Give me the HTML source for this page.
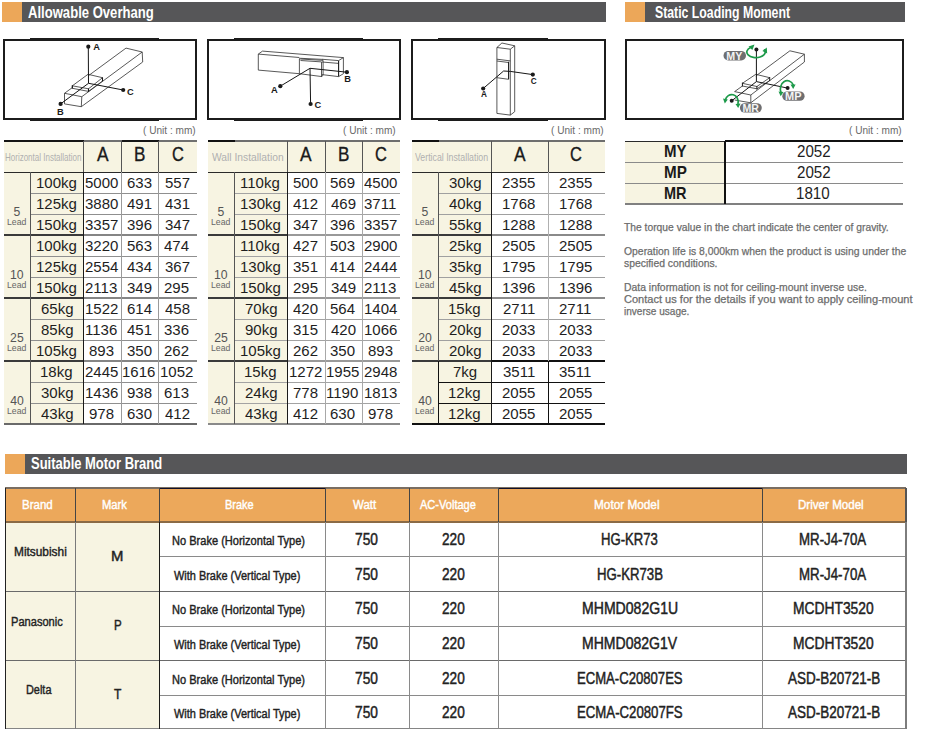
<!DOCTYPE html>
<html><head><meta charset="utf-8"><style>
html,body{margin:0;padding:0;background:#fff;}
body{width:925px;height:734px;position:relative;overflow:hidden;font-family:"Liberation Sans",sans-serif;}
</style></head><body>
<div style="position:absolute;left:2.00px;top:2.00px;width:20.00px;height:20.00px;background:#eca759;"></div><div style="position:absolute;left:22.00px;top:2.00px;width:584.00px;height:20.00px;background:#565658;"></div><div style="position:absolute;left:28.07px;top:5.00px;font-size:15.92px;line-height:15.92px;font-weight:bold;color:#fff;white-space:nowrap;transform:scaleX(0.8222);transform-origin:0 0;">Allowable Overhang</div><div style="position:absolute;left:625.00px;top:2.00px;width:20.00px;height:20.00px;background:#eca759;"></div><div style="position:absolute;left:645.00px;top:2.00px;width:260.00px;height:20.00px;background:#565658;"></div><div style="position:absolute;left:654.65px;top:5.00px;font-size:15.92px;line-height:15.92px;font-weight:bold;color:#fff;white-space:nowrap;transform:scaleX(0.7717);transform-origin:0 0;">Static Loading Moment</div><div style="position:absolute;left:5.00px;top:454.00px;width:20.00px;height:20.00px;background:#eca759;"></div><div style="position:absolute;left:25.00px;top:454.00px;width:882.00px;height:20.00px;background:#565658;"></div><div style="position:absolute;left:30.63px;top:456.00px;font-size:15.92px;line-height:15.92px;font-weight:bold;color:#fff;white-space:nowrap;transform:scaleX(0.8154);transform-origin:0 0;">Suitable Motor Brand</div><div style="position:absolute;left:3.00px;top:39.00px;width:194.00px;height:2.00px;background:#1c1c1c;"></div><div style="position:absolute;left:3.00px;top:118.00px;width:194.00px;height:2.00px;background:#1c1c1c;"></div><div style="position:absolute;left:3.00px;top:39.00px;width:2.00px;height:81.00px;background:#1c1c1c;"></div><div style="position:absolute;left:195.00px;top:39.00px;width:2.00px;height:81.00px;background:#1c1c1c;"></div><div style="position:absolute;left:30.00px;top:38.20px;width:129.00px;height:0.80px;background:#1c1c1c;"></div><div style="position:absolute;left:30.00px;top:120.00px;width:129.00px;height:0.80px;background:#1c1c1c;"></div><div style="position:absolute;left:207.00px;top:39.00px;width:194.00px;height:2.00px;background:#1c1c1c;"></div><div style="position:absolute;left:207.00px;top:118.00px;width:194.00px;height:2.00px;background:#1c1c1c;"></div><div style="position:absolute;left:207.00px;top:39.00px;width:2.00px;height:81.00px;background:#1c1c1c;"></div><div style="position:absolute;left:399.00px;top:39.00px;width:2.00px;height:81.00px;background:#1c1c1c;"></div><div style="position:absolute;left:234.00px;top:38.20px;width:129.00px;height:0.80px;background:#1c1c1c;"></div><div style="position:absolute;left:234.00px;top:120.00px;width:129.00px;height:0.80px;background:#1c1c1c;"></div><div style="position:absolute;left:411.00px;top:39.00px;width:195.00px;height:2.00px;background:#1c1c1c;"></div><div style="position:absolute;left:411.00px;top:118.00px;width:195.00px;height:2.00px;background:#1c1c1c;"></div><div style="position:absolute;left:411.00px;top:39.00px;width:2.00px;height:81.00px;background:#1c1c1c;"></div><div style="position:absolute;left:604.00px;top:39.00px;width:2.00px;height:81.00px;background:#1c1c1c;"></div><div style="position:absolute;left:438.00px;top:38.20px;width:110.00px;height:0.80px;background:#1c1c1c;"></div><div style="position:absolute;left:438.00px;top:120.00px;width:110.00px;height:0.80px;background:#1c1c1c;"></div><div style="position:absolute;left:624.50px;top:39.00px;width:279.50px;height:2.00px;background:#1c1c1c;"></div><div style="position:absolute;left:624.50px;top:118.00px;width:279.50px;height:2.00px;background:#1c1c1c;"></div><div style="position:absolute;left:624.50px;top:39.00px;width:2.00px;height:81.00px;background:#1c1c1c;"></div><div style="position:absolute;left:902.00px;top:39.00px;width:2.00px;height:81.00px;background:#1c1c1c;"></div><div style="position:absolute;left:143.27px;top:125.00px;font-size:11.34px;line-height:11.34px;font-weight:normal;color:#6a6a6a;white-space:nowrap;transform:scaleX(0.8911);transform-origin:0 0;">( Unit : mm)</div><div style="position:absolute;left:342.97px;top:125.00px;font-size:11.34px;line-height:11.34px;font-weight:normal;color:#6a6a6a;white-space:nowrap;transform:scaleX(0.8911);transform-origin:0 0;">( Unit : mm)</div><div style="position:absolute;left:550.57px;top:125.00px;font-size:11.34px;line-height:11.34px;font-weight:normal;color:#6a6a6a;white-space:nowrap;transform:scaleX(0.8911);transform-origin:0 0;">( Unit : mm)</div><div style="position:absolute;left:849.17px;top:125.00px;font-size:11.34px;line-height:11.34px;font-weight:normal;color:#6a6a6a;white-space:nowrap;transform:scaleX(0.8911);transform-origin:0 0;">( Unit : mm)</div><div style="position:absolute;left:4.00px;top:141.00px;width:193.00px;height:31.00px;background:#f7f4e2;"></div><div style="position:absolute;left:4.00px;top:172.00px;width:79.50px;height:252.00px;background:#f7f4e2;"></div><div style="position:absolute;left:5.14px;top:152.00px;font-size:10.76px;line-height:10.76px;font-weight:normal;color:#b0b0b0;white-space:nowrap;transform:scaleX(0.7437);transform-origin:0 0;">Horizontal Installation</div><div style="position:absolute;left:96.57px;top:144.00px;font-size:20.35px;line-height:20.35px;font-weight:normal;color:#1a1a1a;white-space:nowrap;transform:scaleX(0.8524);transform-origin:0 0;-webkit-text-stroke:0.35px #1a1a1a;">A</div><div style="position:absolute;left:133.90px;top:144.00px;font-size:20.35px;line-height:20.35px;font-weight:normal;color:#1a1a1a;white-space:nowrap;transform:scaleX(0.8408);transform-origin:0 0;-webkit-text-stroke:0.35px #1a1a1a;">B</div><div style="position:absolute;left:171.56px;top:144.00px;font-size:20.35px;line-height:20.35px;font-weight:normal;color:#1a1a1a;white-space:nowrap;transform:scaleX(0.8083);transform-origin:0 0;-webkit-text-stroke:0.35px #1a1a1a;">C</div><div style="position:absolute;left:4.00px;top:140.00px;width:79.50px;height:1.50px;background:#151515;"></div><div style="position:absolute;left:83.50px;top:140.00px;width:38.00px;height:1.50px;background:#707070;"></div><div style="position:absolute;left:121.50px;top:140.00px;width:37.00px;height:1.50px;background:#151515;"></div><div style="position:absolute;left:158.50px;top:140.00px;width:38.50px;height:1.50px;background:#707070;"></div><div style="position:absolute;left:4.00px;top:171.50px;width:193.00px;height:1.50px;background:#2a2a2a;"></div><div style="position:absolute;left:83.00px;top:141.00px;width:1.10px;height:31.00px;background:#555;"></div><div style="position:absolute;left:121.00px;top:141.00px;width:1.10px;height:31.00px;background:#555;"></div><div style="position:absolute;left:158.00px;top:141.00px;width:1.10px;height:31.00px;background:#555;"></div><div style="position:absolute;left:30.50px;top:192.50px;width:166.50px;height:1.10px;background:#8f8f8f;"></div><div style="position:absolute;left:30.50px;top:213.50px;width:166.50px;height:1.10px;background:#8f8f8f;"></div><div style="position:absolute;left:4.00px;top:234.40px;width:79.50px;height:1.20px;background:#3a3a3a;"></div><div style="position:absolute;left:83.50px;top:234.40px;width:113.50px;height:1.30px;background:#858585;"></div><div style="position:absolute;left:30.50px;top:255.50px;width:166.50px;height:1.10px;background:#8f8f8f;"></div><div style="position:absolute;left:30.50px;top:276.50px;width:166.50px;height:1.10px;background:#8f8f8f;"></div><div style="position:absolute;left:4.00px;top:297.40px;width:79.50px;height:1.20px;background:#3a3a3a;"></div><div style="position:absolute;left:83.50px;top:297.40px;width:113.50px;height:1.30px;background:#858585;"></div><div style="position:absolute;left:30.50px;top:318.50px;width:166.50px;height:1.10px;background:#8f8f8f;"></div><div style="position:absolute;left:30.50px;top:339.50px;width:166.50px;height:1.10px;background:#8f8f8f;"></div><div style="position:absolute;left:4.00px;top:360.40px;width:79.50px;height:1.20px;background:#3a3a3a;"></div><div style="position:absolute;left:83.50px;top:360.40px;width:113.50px;height:1.30px;background:#858585;"></div><div style="position:absolute;left:30.50px;top:381.50px;width:166.50px;height:1.10px;background:#8f8f8f;"></div><div style="position:absolute;left:30.50px;top:402.50px;width:166.50px;height:1.10px;background:#8f8f8f;"></div><div style="position:absolute;left:4.00px;top:423.20px;width:193.00px;height:2.00px;background:#6a6a6a;"></div><div style="position:absolute;left:30.00px;top:172.00px;width:1.10px;height:252.00px;background:#555;"></div><div style="position:absolute;left:82.90px;top:172.00px;width:1.40px;height:252.00px;background:#1a1a1a;"></div><div style="position:absolute;left:121.00px;top:172.00px;width:1.20px;height:252.00px;background:#9a9a9a;"></div><div style="position:absolute;left:158.00px;top:172.00px;width:1.20px;height:252.00px;background:#9a9a9a;"></div><div style="position:absolute;left:13.57px;top:206.00px;font-size:12.21px;line-height:12.21px;font-weight:normal;color:#555;white-space:nowrap;">5</div><div style="position:absolute;left:7.09px;top:217.00px;font-size:9.59px;line-height:9.59px;font-weight:normal;color:#666;white-space:nowrap;transform:scaleX(0.9079);transform-origin:0 0;">Lead</div><div style="position:absolute;left:36.17px;top:175.00px;font-size:15.50px;line-height:15.50px;font-weight:normal;color:#1e1e1e;white-space:nowrap;transform:scaleX(0.9680);transform-origin:0 0;">100kg</div><div style="position:absolute;left:85.00px;top:175.00px;font-size:15.50px;line-height:15.50px;font-weight:normal;color:#1e1e1e;white-space:nowrap;transform:scaleX(0.9680);transform-origin:0 0;">5000</div><div style="position:absolute;left:126.63px;top:175.00px;font-size:15.50px;line-height:15.50px;font-weight:normal;color:#1e1e1e;white-space:nowrap;transform:scaleX(0.9680);transform-origin:0 0;">633</div><div style="position:absolute;left:164.51px;top:175.00px;font-size:15.50px;line-height:15.50px;font-weight:normal;color:#1e1e1e;white-space:nowrap;transform:scaleX(0.9680);transform-origin:0 0;">557</div><div style="position:absolute;left:36.17px;top:196.00px;font-size:15.50px;line-height:15.50px;font-weight:normal;color:#1e1e1e;white-space:nowrap;transform:scaleX(0.9680);transform-origin:0 0;">125kg</div><div style="position:absolute;left:85.02px;top:196.00px;font-size:15.50px;line-height:15.50px;font-weight:normal;color:#1e1e1e;white-space:nowrap;transform:scaleX(0.9680);transform-origin:0 0;">3880</div><div style="position:absolute;left:126.88px;top:196.00px;font-size:15.50px;line-height:15.50px;font-weight:normal;color:#1e1e1e;white-space:nowrap;transform:scaleX(0.9680);transform-origin:0 0;">491</div><div style="position:absolute;left:164.63px;top:196.00px;font-size:15.50px;line-height:15.50px;font-weight:normal;color:#1e1e1e;white-space:nowrap;transform:scaleX(0.9680);transform-origin:0 0;">431</div><div style="position:absolute;left:36.17px;top:217.00px;font-size:15.50px;line-height:15.50px;font-weight:normal;color:#1e1e1e;white-space:nowrap;transform:scaleX(0.9680);transform-origin:0 0;">150kg</div><div style="position:absolute;left:85.10px;top:217.00px;font-size:15.50px;line-height:15.50px;font-weight:normal;color:#1e1e1e;white-space:nowrap;transform:scaleX(0.9680);transform-origin:0 0;">3357</div><div style="position:absolute;left:126.73px;top:217.00px;font-size:15.50px;line-height:15.50px;font-weight:normal;color:#1e1e1e;white-space:nowrap;transform:scaleX(0.9680);transform-origin:0 0;">396</div><div style="position:absolute;left:164.52px;top:217.00px;font-size:15.50px;line-height:15.50px;font-weight:normal;color:#1e1e1e;white-space:nowrap;transform:scaleX(0.9680);transform-origin:0 0;">347</div><div style="position:absolute;left:9.93px;top:269.00px;font-size:12.21px;line-height:12.21px;font-weight:normal;color:#555;white-space:nowrap;">10</div><div style="position:absolute;left:7.09px;top:280.00px;font-size:9.59px;line-height:9.59px;font-weight:normal;color:#666;white-space:nowrap;transform:scaleX(0.9079);transform-origin:0 0;">Lead</div><div style="position:absolute;left:36.17px;top:238.00px;font-size:15.50px;line-height:15.50px;font-weight:normal;color:#1e1e1e;white-space:nowrap;transform:scaleX(0.9680);transform-origin:0 0;">100kg</div><div style="position:absolute;left:85.02px;top:238.00px;font-size:15.50px;line-height:15.50px;font-weight:normal;color:#1e1e1e;white-space:nowrap;transform:scaleX(0.9680);transform-origin:0 0;">3220</div><div style="position:absolute;left:126.71px;top:238.00px;font-size:15.50px;line-height:15.50px;font-weight:normal;color:#1e1e1e;white-space:nowrap;transform:scaleX(0.9680);transform-origin:0 0;">563</div><div style="position:absolute;left:164.48px;top:238.00px;font-size:15.50px;line-height:15.50px;font-weight:normal;color:#1e1e1e;white-space:nowrap;transform:scaleX(0.9680);transform-origin:0 0;">474</div><div style="position:absolute;left:36.17px;top:259.00px;font-size:15.50px;line-height:15.50px;font-weight:normal;color:#1e1e1e;white-space:nowrap;transform:scaleX(0.9680);transform-origin:0 0;">125kg</div><div style="position:absolute;left:84.85px;top:259.00px;font-size:15.50px;line-height:15.50px;font-weight:normal;color:#1e1e1e;white-space:nowrap;transform:scaleX(0.9680);transform-origin:0 0;">2554</div><div style="position:absolute;left:126.73px;top:259.00px;font-size:15.50px;line-height:15.50px;font-weight:normal;color:#1e1e1e;white-space:nowrap;transform:scaleX(0.9680);transform-origin:0 0;">434</div><div style="position:absolute;left:164.52px;top:259.00px;font-size:15.50px;line-height:15.50px;font-weight:normal;color:#1e1e1e;white-space:nowrap;transform:scaleX(0.9680);transform-origin:0 0;">367</div><div style="position:absolute;left:36.17px;top:280.00px;font-size:15.50px;line-height:15.50px;font-weight:normal;color:#1e1e1e;white-space:nowrap;transform:scaleX(0.9680);transform-origin:0 0;">150kg</div><div style="position:absolute;left:84.96px;top:280.00px;font-size:15.50px;line-height:15.50px;font-weight:normal;color:#1e1e1e;white-space:nowrap;transform:scaleX(0.9680);transform-origin:0 0;">2113</div><div style="position:absolute;left:126.75px;top:280.00px;font-size:15.50px;line-height:15.50px;font-weight:normal;color:#1e1e1e;white-space:nowrap;transform:scaleX(0.9680);transform-origin:0 0;">349</div><div style="position:absolute;left:164.37px;top:280.00px;font-size:15.50px;line-height:15.50px;font-weight:normal;color:#1e1e1e;white-space:nowrap;transform:scaleX(0.9680);transform-origin:0 0;">295</div><div style="position:absolute;left:10.11px;top:332.00px;font-size:12.21px;line-height:12.21px;font-weight:normal;color:#555;white-space:nowrap;">25</div><div style="position:absolute;left:7.09px;top:343.00px;font-size:9.59px;line-height:9.59px;font-weight:normal;color:#666;white-space:nowrap;transform:scaleX(0.9079);transform-origin:0 0;">Lead</div><div style="position:absolute;left:40.53px;top:301.00px;font-size:15.50px;line-height:15.50px;font-weight:normal;color:#1e1e1e;white-space:nowrap;transform:scaleX(0.9680);transform-origin:0 0;">65kg</div><div style="position:absolute;left:84.82px;top:301.00px;font-size:15.50px;line-height:15.50px;font-weight:normal;color:#1e1e1e;white-space:nowrap;transform:scaleX(0.9680);transform-origin:0 0;">1522</div><div style="position:absolute;left:126.52px;top:301.00px;font-size:15.50px;line-height:15.50px;font-weight:normal;color:#1e1e1e;white-space:nowrap;transform:scaleX(0.9680);transform-origin:0 0;">614</div><div style="position:absolute;left:164.59px;top:301.00px;font-size:15.50px;line-height:15.50px;font-weight:normal;color:#1e1e1e;white-space:nowrap;transform:scaleX(0.9680);transform-origin:0 0;">458</div><div style="position:absolute;left:40.59px;top:322.00px;font-size:15.50px;line-height:15.50px;font-weight:normal;color:#1e1e1e;white-space:nowrap;transform:scaleX(0.9680);transform-origin:0 0;">85kg</div><div style="position:absolute;left:84.77px;top:322.00px;font-size:15.50px;line-height:15.50px;font-weight:normal;color:#1e1e1e;white-space:nowrap;transform:scaleX(0.9680);transform-origin:0 0;">1136</div><div style="position:absolute;left:126.88px;top:322.00px;font-size:15.50px;line-height:15.50px;font-weight:normal;color:#1e1e1e;white-space:nowrap;transform:scaleX(0.9680);transform-origin:0 0;">451</div><div style="position:absolute;left:164.48px;top:322.00px;font-size:15.50px;line-height:15.50px;font-weight:normal;color:#1e1e1e;white-space:nowrap;transform:scaleX(0.9680);transform-origin:0 0;">336</div><div style="position:absolute;left:36.17px;top:343.00px;font-size:15.50px;line-height:15.50px;font-weight:normal;color:#1e1e1e;white-space:nowrap;transform:scaleX(0.9680);transform-origin:0 0;">105kg</div><div style="position:absolute;left:89.19px;top:343.00px;font-size:15.50px;line-height:15.50px;font-weight:normal;color:#1e1e1e;white-space:nowrap;transform:scaleX(0.9680);transform-origin:0 0;">893</div><div style="position:absolute;left:126.69px;top:343.00px;font-size:15.50px;line-height:15.50px;font-weight:normal;color:#1e1e1e;white-space:nowrap;transform:scaleX(0.9680);transform-origin:0 0;">350</div><div style="position:absolute;left:164.43px;top:343.00px;font-size:15.50px;line-height:15.50px;font-weight:normal;color:#1e1e1e;white-space:nowrap;transform:scaleX(0.9680);transform-origin:0 0;">262</div><div style="position:absolute;left:10.26px;top:395.00px;font-size:12.21px;line-height:12.21px;font-weight:normal;color:#555;white-space:nowrap;">40</div><div style="position:absolute;left:7.09px;top:406.00px;font-size:9.59px;line-height:9.59px;font-weight:normal;color:#666;white-space:nowrap;transform:scaleX(0.9079);transform-origin:0 0;">Lead</div><div style="position:absolute;left:40.34px;top:364.00px;font-size:15.50px;line-height:15.50px;font-weight:normal;color:#1e1e1e;white-space:nowrap;transform:scaleX(0.9680);transform-origin:0 0;">18kg</div><div style="position:absolute;left:84.95px;top:364.00px;font-size:15.50px;line-height:15.50px;font-weight:normal;color:#1e1e1e;white-space:nowrap;transform:scaleX(0.9680);transform-origin:0 0;">2445</div><div style="position:absolute;left:122.27px;top:364.00px;font-size:15.50px;line-height:15.50px;font-weight:normal;color:#1e1e1e;white-space:nowrap;transform:scaleX(0.9680);transform-origin:0 0;">1616</div><div style="position:absolute;left:160.07px;top:364.00px;font-size:15.50px;line-height:15.50px;font-weight:normal;color:#1e1e1e;white-space:nowrap;transform:scaleX(0.9680);transform-origin:0 0;">1052</div><div style="position:absolute;left:40.63px;top:385.00px;font-size:15.50px;line-height:15.50px;font-weight:normal;color:#1e1e1e;white-space:nowrap;transform:scaleX(0.9680);transform-origin:0 0;">30kg</div><div style="position:absolute;left:84.77px;top:385.00px;font-size:15.50px;line-height:15.50px;font-weight:normal;color:#1e1e1e;white-space:nowrap;transform:scaleX(0.9680);transform-origin:0 0;">1436</div><div style="position:absolute;left:126.66px;top:385.00px;font-size:15.50px;line-height:15.50px;font-weight:normal;color:#1e1e1e;white-space:nowrap;transform:scaleX(0.9680);transform-origin:0 0;">938</div><div style="position:absolute;left:164.38px;top:385.00px;font-size:15.50px;line-height:15.50px;font-weight:normal;color:#1e1e1e;white-space:nowrap;transform:scaleX(0.9680);transform-origin:0 0;">613</div><div style="position:absolute;left:40.74px;top:406.00px;font-size:15.50px;line-height:15.50px;font-weight:normal;color:#1e1e1e;white-space:nowrap;transform:scaleX(0.9680);transform-origin:0 0;">43kg</div><div style="position:absolute;left:89.16px;top:406.00px;font-size:15.50px;line-height:15.50px;font-weight:normal;color:#1e1e1e;white-space:nowrap;transform:scaleX(0.9680);transform-origin:0 0;">978</div><div style="position:absolute;left:126.60px;top:406.00px;font-size:15.50px;line-height:15.50px;font-weight:normal;color:#1e1e1e;white-space:nowrap;transform:scaleX(0.9680);transform-origin:0 0;">630</div><div style="position:absolute;left:164.64px;top:406.00px;font-size:15.50px;line-height:15.50px;font-weight:normal;color:#1e1e1e;white-space:nowrap;transform:scaleX(0.9680);transform-origin:0 0;">412</div><div style="position:absolute;left:208.00px;top:141.00px;width:192.30px;height:31.00px;background:#f7f4e2;"></div><div style="position:absolute;left:208.00px;top:172.00px;width:79.50px;height:252.00px;background:#f7f4e2;"></div><div style="position:absolute;left:211.85px;top:152.00px;font-size:10.76px;line-height:10.76px;font-weight:normal;color:#b0b0b0;white-space:nowrap;transform:scaleX(0.9561);transform-origin:0 0;">Wall Installation</div><div style="position:absolute;left:300.32px;top:144.00px;font-size:20.35px;line-height:20.35px;font-weight:normal;color:#1a1a1a;white-space:nowrap;transform:scaleX(0.8524);transform-origin:0 0;-webkit-text-stroke:0.35px #1a1a1a;">A</div><div style="position:absolute;left:337.65px;top:144.00px;font-size:20.35px;line-height:20.35px;font-weight:normal;color:#1a1a1a;white-space:nowrap;transform:scaleX(0.8408);transform-origin:0 0;-webkit-text-stroke:0.35px #1a1a1a;">B</div><div style="position:absolute;left:375.21px;top:144.00px;font-size:20.35px;line-height:20.35px;font-weight:normal;color:#1a1a1a;white-space:nowrap;transform:scaleX(0.8083);transform-origin:0 0;-webkit-text-stroke:0.35px #1a1a1a;">C</div><div style="position:absolute;left:208.00px;top:140.00px;width:26.60px;height:1.50px;background:#111;"></div><div style="position:absolute;left:234.60px;top:140.00px;width:165.70px;height:1.50px;background:#6e6e6e;"></div><div style="position:absolute;left:208.00px;top:171.50px;width:192.30px;height:1.50px;background:#2a2a2a;"></div><div style="position:absolute;left:287.00px;top:141.00px;width:1.10px;height:31.00px;background:#555;"></div><div style="position:absolute;left:324.50px;top:141.00px;width:1.10px;height:31.00px;background:#555;"></div><div style="position:absolute;left:362.00px;top:141.00px;width:1.10px;height:31.00px;background:#555;"></div><div style="position:absolute;left:234.60px;top:192.50px;width:165.70px;height:1.10px;background:#a3a3a3;"></div><div style="position:absolute;left:234.60px;top:213.50px;width:165.70px;height:1.10px;background:#a3a3a3;"></div><div style="position:absolute;left:208.00px;top:234.40px;width:79.50px;height:1.20px;background:#3a3a3a;"></div><div style="position:absolute;left:287.50px;top:234.40px;width:112.80px;height:1.30px;background:#999;"></div><div style="position:absolute;left:234.60px;top:255.50px;width:165.70px;height:1.10px;background:#a3a3a3;"></div><div style="position:absolute;left:234.60px;top:276.50px;width:165.70px;height:1.10px;background:#a3a3a3;"></div><div style="position:absolute;left:208.00px;top:297.40px;width:79.50px;height:1.20px;background:#3a3a3a;"></div><div style="position:absolute;left:287.50px;top:297.40px;width:112.80px;height:1.30px;background:#999;"></div><div style="position:absolute;left:234.60px;top:318.50px;width:165.70px;height:1.10px;background:#a3a3a3;"></div><div style="position:absolute;left:234.60px;top:339.50px;width:165.70px;height:1.10px;background:#a3a3a3;"></div><div style="position:absolute;left:208.00px;top:360.40px;width:79.50px;height:1.20px;background:#3a3a3a;"></div><div style="position:absolute;left:287.50px;top:360.40px;width:112.80px;height:1.30px;background:#999;"></div><div style="position:absolute;left:234.60px;top:381.50px;width:165.70px;height:1.10px;background:#a3a3a3;"></div><div style="position:absolute;left:234.60px;top:402.50px;width:165.70px;height:1.10px;background:#a3a3a3;"></div><div style="position:absolute;left:208.00px;top:423.20px;width:192.30px;height:2.00px;background:#8a8a8a;"></div><div style="position:absolute;left:234.10px;top:172.00px;width:1.10px;height:252.00px;background:#555;"></div><div style="position:absolute;left:286.90px;top:172.00px;width:1.40px;height:252.00px;background:#1a1a1a;"></div><div style="position:absolute;left:324.50px;top:172.00px;width:1.20px;height:252.00px;background:#a8a8a8;"></div><div style="position:absolute;left:362.00px;top:172.00px;width:1.20px;height:252.00px;background:#a8a8a8;"></div><div style="position:absolute;left:217.62px;top:206.00px;font-size:12.21px;line-height:12.21px;font-weight:normal;color:#555;white-space:nowrap;">5</div><div style="position:absolute;left:211.14px;top:217.00px;font-size:9.59px;line-height:9.59px;font-weight:normal;color:#666;white-space:nowrap;transform:scaleX(0.9079);transform-origin:0 0;">Lead</div><div style="position:absolute;left:240.22px;top:175.00px;font-size:15.50px;line-height:15.50px;font-weight:normal;color:#1e1e1e;white-space:nowrap;transform:scaleX(0.9680);transform-origin:0 0;">110kg</div><div style="position:absolute;left:292.93px;top:175.00px;font-size:15.50px;line-height:15.50px;font-weight:normal;color:#1e1e1e;white-space:nowrap;transform:scaleX(0.9680);transform-origin:0 0;">500</div><div style="position:absolute;left:330.49px;top:175.00px;font-size:15.50px;line-height:15.50px;font-weight:normal;color:#1e1e1e;white-space:nowrap;transform:scaleX(0.9680);transform-origin:0 0;">569</div><div style="position:absolute;left:364.03px;top:175.00px;font-size:15.50px;line-height:15.50px;font-weight:normal;color:#1e1e1e;white-space:nowrap;transform:scaleX(0.9680);transform-origin:0 0;">4500</div><div style="position:absolute;left:240.22px;top:196.00px;font-size:15.50px;line-height:15.50px;font-weight:normal;color:#1e1e1e;white-space:nowrap;transform:scaleX(0.9680);transform-origin:0 0;">130kg</div><div style="position:absolute;left:293.14px;top:196.00px;font-size:15.50px;line-height:15.50px;font-weight:normal;color:#1e1e1e;white-space:nowrap;transform:scaleX(0.9680);transform-origin:0 0;">412</div><div style="position:absolute;left:330.62px;top:196.00px;font-size:15.50px;line-height:15.50px;font-weight:normal;color:#1e1e1e;white-space:nowrap;transform:scaleX(0.9680);transform-origin:0 0;">469</div><div style="position:absolute;left:363.99px;top:196.00px;font-size:15.50px;line-height:15.50px;font-weight:normal;color:#1e1e1e;white-space:nowrap;transform:scaleX(0.9680);transform-origin:0 0;">3711</div><div style="position:absolute;left:240.22px;top:217.00px;font-size:15.50px;line-height:15.50px;font-weight:normal;color:#1e1e1e;white-space:nowrap;transform:scaleX(0.9680);transform-origin:0 0;">150kg</div><div style="position:absolute;left:293.02px;top:217.00px;font-size:15.50px;line-height:15.50px;font-weight:normal;color:#1e1e1e;white-space:nowrap;transform:scaleX(0.9680);transform-origin:0 0;">347</div><div style="position:absolute;left:330.48px;top:217.00px;font-size:15.50px;line-height:15.50px;font-weight:normal;color:#1e1e1e;white-space:nowrap;transform:scaleX(0.9680);transform-origin:0 0;">396</div><div style="position:absolute;left:364.00px;top:217.00px;font-size:15.50px;line-height:15.50px;font-weight:normal;color:#1e1e1e;white-space:nowrap;transform:scaleX(0.9680);transform-origin:0 0;">3357</div><div style="position:absolute;left:213.98px;top:269.00px;font-size:12.21px;line-height:12.21px;font-weight:normal;color:#555;white-space:nowrap;">10</div><div style="position:absolute;left:211.14px;top:280.00px;font-size:9.59px;line-height:9.59px;font-weight:normal;color:#666;white-space:nowrap;transform:scaleX(0.9079);transform-origin:0 0;">Lead</div><div style="position:absolute;left:240.22px;top:238.00px;font-size:15.50px;line-height:15.50px;font-weight:normal;color:#1e1e1e;white-space:nowrap;transform:scaleX(0.9680);transform-origin:0 0;">110kg</div><div style="position:absolute;left:293.14px;top:238.00px;font-size:15.50px;line-height:15.50px;font-weight:normal;color:#1e1e1e;white-space:nowrap;transform:scaleX(0.9680);transform-origin:0 0;">427</div><div style="position:absolute;left:330.46px;top:238.00px;font-size:15.50px;line-height:15.50px;font-weight:normal;color:#1e1e1e;white-space:nowrap;transform:scaleX(0.9680);transform-origin:0 0;">503</div><div style="position:absolute;left:363.83px;top:238.00px;font-size:15.50px;line-height:15.50px;font-weight:normal;color:#1e1e1e;white-space:nowrap;transform:scaleX(0.9680);transform-origin:0 0;">2900</div><div style="position:absolute;left:240.22px;top:259.00px;font-size:15.50px;line-height:15.50px;font-weight:normal;color:#1e1e1e;white-space:nowrap;transform:scaleX(0.9680);transform-origin:0 0;">130kg</div><div style="position:absolute;left:293.01px;top:259.00px;font-size:15.50px;line-height:15.50px;font-weight:normal;color:#1e1e1e;white-space:nowrap;transform:scaleX(0.9680);transform-origin:0 0;">351</div><div style="position:absolute;left:330.48px;top:259.00px;font-size:15.50px;line-height:15.50px;font-weight:normal;color:#1e1e1e;white-space:nowrap;transform:scaleX(0.9680);transform-origin:0 0;">414</div><div style="position:absolute;left:363.75px;top:259.00px;font-size:15.50px;line-height:15.50px;font-weight:normal;color:#1e1e1e;white-space:nowrap;transform:scaleX(0.9680);transform-origin:0 0;">2444</div><div style="position:absolute;left:240.22px;top:280.00px;font-size:15.50px;line-height:15.50px;font-weight:normal;color:#1e1e1e;white-space:nowrap;transform:scaleX(0.9680);transform-origin:0 0;">150kg</div><div style="position:absolute;left:292.87px;top:280.00px;font-size:15.50px;line-height:15.50px;font-weight:normal;color:#1e1e1e;white-space:nowrap;transform:scaleX(0.9680);transform-origin:0 0;">295</div><div style="position:absolute;left:330.50px;top:280.00px;font-size:15.50px;line-height:15.50px;font-weight:normal;color:#1e1e1e;white-space:nowrap;transform:scaleX(0.9680);transform-origin:0 0;">349</div><div style="position:absolute;left:363.86px;top:280.00px;font-size:15.50px;line-height:15.50px;font-weight:normal;color:#1e1e1e;white-space:nowrap;transform:scaleX(0.9680);transform-origin:0 0;">2113</div><div style="position:absolute;left:214.16px;top:332.00px;font-size:12.21px;line-height:12.21px;font-weight:normal;color:#555;white-space:nowrap;">25</div><div style="position:absolute;left:211.14px;top:343.00px;font-size:9.59px;line-height:9.59px;font-weight:normal;color:#666;white-space:nowrap;transform:scaleX(0.9079);transform-origin:0 0;">Lead</div><div style="position:absolute;left:244.58px;top:301.00px;font-size:15.50px;line-height:15.50px;font-weight:normal;color:#1e1e1e;white-space:nowrap;transform:scaleX(0.9680);transform-origin:0 0;">70kg</div><div style="position:absolute;left:293.05px;top:301.00px;font-size:15.50px;line-height:15.50px;font-weight:normal;color:#1e1e1e;white-space:nowrap;transform:scaleX(0.9680);transform-origin:0 0;">420</div><div style="position:absolute;left:330.35px;top:301.00px;font-size:15.50px;line-height:15.50px;font-weight:normal;color:#1e1e1e;white-space:nowrap;transform:scaleX(0.9680);transform-origin:0 0;">564</div><div style="position:absolute;left:363.56px;top:301.00px;font-size:15.50px;line-height:15.50px;font-weight:normal;color:#1e1e1e;white-space:nowrap;transform:scaleX(0.9680);transform-origin:0 0;">1404</div><div style="position:absolute;left:244.61px;top:322.00px;font-size:15.50px;line-height:15.50px;font-weight:normal;color:#1e1e1e;white-space:nowrap;transform:scaleX(0.9680);transform-origin:0 0;">90kg</div><div style="position:absolute;left:292.96px;top:322.00px;font-size:15.50px;line-height:15.50px;font-weight:normal;color:#1e1e1e;white-space:nowrap;transform:scaleX(0.9680);transform-origin:0 0;">315</div><div style="position:absolute;left:330.55px;top:322.00px;font-size:15.50px;line-height:15.50px;font-weight:normal;color:#1e1e1e;white-space:nowrap;transform:scaleX(0.9680);transform-origin:0 0;">420</div><div style="position:absolute;left:363.67px;top:322.00px;font-size:15.50px;line-height:15.50px;font-weight:normal;color:#1e1e1e;white-space:nowrap;transform:scaleX(0.9680);transform-origin:0 0;">1066</div><div style="position:absolute;left:240.22px;top:343.00px;font-size:15.50px;line-height:15.50px;font-weight:normal;color:#1e1e1e;white-space:nowrap;transform:scaleX(0.9680);transform-origin:0 0;">105kg</div><div style="position:absolute;left:292.93px;top:343.00px;font-size:15.50px;line-height:15.50px;font-weight:normal;color:#1e1e1e;white-space:nowrap;transform:scaleX(0.9680);transform-origin:0 0;">262</div><div style="position:absolute;left:330.44px;top:343.00px;font-size:15.50px;line-height:15.50px;font-weight:normal;color:#1e1e1e;white-space:nowrap;transform:scaleX(0.9680);transform-origin:0 0;">350</div><div style="position:absolute;left:368.09px;top:343.00px;font-size:15.50px;line-height:15.50px;font-weight:normal;color:#1e1e1e;white-space:nowrap;transform:scaleX(0.9680);transform-origin:0 0;">893</div><div style="position:absolute;left:214.31px;top:395.00px;font-size:12.21px;line-height:12.21px;font-weight:normal;color:#555;white-space:nowrap;">40</div><div style="position:absolute;left:211.14px;top:406.00px;font-size:9.59px;line-height:9.59px;font-weight:normal;color:#666;white-space:nowrap;transform:scaleX(0.9079);transform-origin:0 0;">Lead</div><div style="position:absolute;left:244.39px;top:364.00px;font-size:15.50px;line-height:15.50px;font-weight:normal;color:#1e1e1e;white-space:nowrap;transform:scaleX(0.9680);transform-origin:0 0;">15kg</div><div style="position:absolute;left:288.57px;top:364.00px;font-size:15.50px;line-height:15.50px;font-weight:normal;color:#1e1e1e;white-space:nowrap;transform:scaleX(0.9680);transform-origin:0 0;">1272</div><div style="position:absolute;left:326.00px;top:364.00px;font-size:15.50px;line-height:15.50px;font-weight:normal;color:#1e1e1e;white-space:nowrap;transform:scaleX(0.9680);transform-origin:0 0;">1955</div><div style="position:absolute;left:363.86px;top:364.00px;font-size:15.50px;line-height:15.50px;font-weight:normal;color:#1e1e1e;white-space:nowrap;transform:scaleX(0.9680);transform-origin:0 0;">2948</div><div style="position:absolute;left:244.59px;top:385.00px;font-size:15.50px;line-height:15.50px;font-weight:normal;color:#1e1e1e;white-space:nowrap;transform:scaleX(0.9680);transform-origin:0 0;">24kg</div><div style="position:absolute;left:292.87px;top:385.00px;font-size:15.50px;line-height:15.50px;font-weight:normal;color:#1e1e1e;white-space:nowrap;transform:scaleX(0.9680);transform-origin:0 0;">778</div><div style="position:absolute;left:325.98px;top:385.00px;font-size:15.50px;line-height:15.50px;font-weight:normal;color:#1e1e1e;white-space:nowrap;transform:scaleX(0.9680);transform-origin:0 0;">1190</div><div style="position:absolute;left:363.67px;top:385.00px;font-size:15.50px;line-height:15.50px;font-weight:normal;color:#1e1e1e;white-space:nowrap;transform:scaleX(0.9680);transform-origin:0 0;">1813</div><div style="position:absolute;left:244.79px;top:406.00px;font-size:15.50px;line-height:15.50px;font-weight:normal;color:#1e1e1e;white-space:nowrap;transform:scaleX(0.9680);transform-origin:0 0;">43kg</div><div style="position:absolute;left:293.14px;top:406.00px;font-size:15.50px;line-height:15.50px;font-weight:normal;color:#1e1e1e;white-space:nowrap;transform:scaleX(0.9680);transform-origin:0 0;">412</div><div style="position:absolute;left:330.35px;top:406.00px;font-size:15.50px;line-height:15.50px;font-weight:normal;color:#1e1e1e;white-space:nowrap;transform:scaleX(0.9680);transform-origin:0 0;">630</div><div style="position:absolute;left:368.06px;top:406.00px;font-size:15.50px;line-height:15.50px;font-weight:normal;color:#1e1e1e;white-space:nowrap;transform:scaleX(0.9680);transform-origin:0 0;">978</div><div style="position:absolute;left:412.00px;top:141.00px;width:192.70px;height:31.00px;background:#f7f4e2;"></div><div style="position:absolute;left:412.00px;top:172.00px;width:79.60px;height:252.00px;background:#f7f4e2;"></div><div style="position:absolute;left:415.06px;top:152.00px;font-size:10.76px;line-height:10.76px;font-weight:normal;color:#b0b0b0;white-space:nowrap;transform:scaleX(0.8154);transform-origin:0 0;">Vertical Installation</div><div style="position:absolute;left:514.07px;top:144.00px;font-size:20.35px;line-height:20.35px;font-weight:normal;color:#1a1a1a;white-space:nowrap;transform:scaleX(0.8524);transform-origin:0 0;-webkit-text-stroke:0.35px #1a1a1a;">A</div><div style="position:absolute;left:570.36px;top:144.00px;font-size:20.35px;line-height:20.35px;font-weight:normal;color:#1a1a1a;white-space:nowrap;transform:scaleX(0.8083);transform-origin:0 0;-webkit-text-stroke:0.35px #1a1a1a;">C</div><div style="position:absolute;left:412.00px;top:140.00px;width:26.60px;height:1.50px;background:#111;"></div><div style="position:absolute;left:438.60px;top:140.00px;width:166.10px;height:1.50px;background:#6e6e6e;"></div><div style="position:absolute;left:412.00px;top:171.50px;width:192.70px;height:1.50px;background:#2a2a2a;"></div><div style="position:absolute;left:491.10px;top:141.00px;width:1.10px;height:31.00px;background:#555;"></div><div style="position:absolute;left:547.90px;top:141.00px;width:1.10px;height:31.00px;background:#555;"></div><div style="position:absolute;left:438.60px;top:192.50px;width:166.10px;height:1.10px;background:#a0a0a0;"></div><div style="position:absolute;left:438.60px;top:213.50px;width:166.10px;height:1.10px;background:#a0a0a0;"></div><div style="position:absolute;left:412.00px;top:234.40px;width:79.60px;height:1.20px;background:#3a3a3a;"></div><div style="position:absolute;left:491.60px;top:234.40px;width:113.10px;height:1.30px;background:#8a8a8a;"></div><div style="position:absolute;left:438.60px;top:255.50px;width:166.10px;height:1.10px;background:#a0a0a0;"></div><div style="position:absolute;left:438.60px;top:276.50px;width:166.10px;height:1.10px;background:#a0a0a0;"></div><div style="position:absolute;left:412.00px;top:297.40px;width:79.60px;height:1.20px;background:#3a3a3a;"></div><div style="position:absolute;left:491.60px;top:297.40px;width:113.10px;height:1.30px;background:#8a8a8a;"></div><div style="position:absolute;left:438.60px;top:318.50px;width:166.10px;height:1.10px;background:#a0a0a0;"></div><div style="position:absolute;left:438.60px;top:339.50px;width:166.10px;height:1.10px;background:#a0a0a0;"></div><div style="position:absolute;left:412.00px;top:360.40px;width:79.60px;height:1.20px;background:#3a3a3a;"></div><div style="position:absolute;left:491.60px;top:360.40px;width:113.10px;height:1.30px;background:#111;"></div><div style="position:absolute;left:438.60px;top:381.50px;width:166.10px;height:1.10px;background:#111;"></div><div style="position:absolute;left:438.60px;top:402.50px;width:166.10px;height:1.10px;background:#111;"></div><div style="position:absolute;left:412.00px;top:423.20px;width:192.70px;height:2.00px;background:#111;"></div><div style="position:absolute;left:438.10px;top:172.00px;width:1.10px;height:252.00px;background:#555;"></div><div style="position:absolute;left:491.00px;top:172.00px;width:1.40px;height:252.00px;background:#1a1a1a;"></div><div style="position:absolute;left:547.90px;top:172.00px;width:1.20px;height:252.00px;background:#b0b0b0;"></div><div style="position:absolute;left:438.10px;top:361.00px;width:1.30px;height:63.00px;background:#111;"></div><div style="position:absolute;left:547.90px;top:361.00px;width:1.20px;height:63.00px;background:#111;"></div><div style="position:absolute;left:421.62px;top:206.00px;font-size:12.21px;line-height:12.21px;font-weight:normal;color:#555;white-space:nowrap;">5</div><div style="position:absolute;left:415.14px;top:217.00px;font-size:9.59px;line-height:9.59px;font-weight:normal;color:#666;white-space:nowrap;transform:scaleX(0.9079);transform-origin:0 0;">Lead</div><div style="position:absolute;left:448.73px;top:175.00px;font-size:15.50px;line-height:15.50px;font-weight:normal;color:#1e1e1e;white-space:nowrap;transform:scaleX(0.9680);transform-origin:0 0;">30kg</div><div style="position:absolute;left:502.45px;top:175.00px;font-size:15.50px;line-height:15.50px;font-weight:normal;color:#1e1e1e;white-space:nowrap;transform:scaleX(0.9680);transform-origin:0 0;">2355</div><div style="position:absolute;left:559.00px;top:175.00px;font-size:15.50px;line-height:15.50px;font-weight:normal;color:#1e1e1e;white-space:nowrap;transform:scaleX(0.9680);transform-origin:0 0;">2355</div><div style="position:absolute;left:448.84px;top:196.00px;font-size:15.50px;line-height:15.50px;font-weight:normal;color:#1e1e1e;white-space:nowrap;transform:scaleX(0.9680);transform-origin:0 0;">40kg</div><div style="position:absolute;left:502.27px;top:196.00px;font-size:15.50px;line-height:15.50px;font-weight:normal;color:#1e1e1e;white-space:nowrap;transform:scaleX(0.9680);transform-origin:0 0;">1768</div><div style="position:absolute;left:558.82px;top:196.00px;font-size:15.50px;line-height:15.50px;font-weight:normal;color:#1e1e1e;white-space:nowrap;transform:scaleX(0.9680);transform-origin:0 0;">1768</div><div style="position:absolute;left:448.72px;top:217.00px;font-size:15.50px;line-height:15.50px;font-weight:normal;color:#1e1e1e;white-space:nowrap;transform:scaleX(0.9680);transform-origin:0 0;">55kg</div><div style="position:absolute;left:502.27px;top:217.00px;font-size:15.50px;line-height:15.50px;font-weight:normal;color:#1e1e1e;white-space:nowrap;transform:scaleX(0.9680);transform-origin:0 0;">1288</div><div style="position:absolute;left:558.82px;top:217.00px;font-size:15.50px;line-height:15.50px;font-weight:normal;color:#1e1e1e;white-space:nowrap;transform:scaleX(0.9680);transform-origin:0 0;">1288</div><div style="position:absolute;left:417.98px;top:269.00px;font-size:12.21px;line-height:12.21px;font-weight:normal;color:#555;white-space:nowrap;">10</div><div style="position:absolute;left:415.14px;top:280.00px;font-size:9.59px;line-height:9.59px;font-weight:normal;color:#666;white-space:nowrap;transform:scaleX(0.9079);transform-origin:0 0;">Lead</div><div style="position:absolute;left:448.64px;top:238.00px;font-size:15.50px;line-height:15.50px;font-weight:normal;color:#1e1e1e;white-space:nowrap;transform:scaleX(0.9680);transform-origin:0 0;">25kg</div><div style="position:absolute;left:502.45px;top:238.00px;font-size:15.50px;line-height:15.50px;font-weight:normal;color:#1e1e1e;white-space:nowrap;transform:scaleX(0.9680);transform-origin:0 0;">2505</div><div style="position:absolute;left:559.00px;top:238.00px;font-size:15.50px;line-height:15.50px;font-weight:normal;color:#1e1e1e;white-space:nowrap;transform:scaleX(0.9680);transform-origin:0 0;">2505</div><div style="position:absolute;left:448.73px;top:259.00px;font-size:15.50px;line-height:15.50px;font-weight:normal;color:#1e1e1e;white-space:nowrap;transform:scaleX(0.9680);transform-origin:0 0;">35kg</div><div style="position:absolute;left:502.25px;top:259.00px;font-size:15.50px;line-height:15.50px;font-weight:normal;color:#1e1e1e;white-space:nowrap;transform:scaleX(0.9680);transform-origin:0 0;">1795</div><div style="position:absolute;left:558.80px;top:259.00px;font-size:15.50px;line-height:15.50px;font-weight:normal;color:#1e1e1e;white-space:nowrap;transform:scaleX(0.9680);transform-origin:0 0;">1795</div><div style="position:absolute;left:448.84px;top:280.00px;font-size:15.50px;line-height:15.50px;font-weight:normal;color:#1e1e1e;white-space:nowrap;transform:scaleX(0.9680);transform-origin:0 0;">45kg</div><div style="position:absolute;left:502.27px;top:280.00px;font-size:15.50px;line-height:15.50px;font-weight:normal;color:#1e1e1e;white-space:nowrap;transform:scaleX(0.9680);transform-origin:0 0;">1396</div><div style="position:absolute;left:558.82px;top:280.00px;font-size:15.50px;line-height:15.50px;font-weight:normal;color:#1e1e1e;white-space:nowrap;transform:scaleX(0.9680);transform-origin:0 0;">1396</div><div style="position:absolute;left:418.14px;top:332.00px;font-size:12.21px;line-height:12.21px;font-weight:normal;color:#555;white-space:nowrap;">20</div><div style="position:absolute;left:415.14px;top:343.00px;font-size:9.59px;line-height:9.59px;font-weight:normal;color:#666;white-space:nowrap;transform:scaleX(0.9079);transform-origin:0 0;">Lead</div><div style="position:absolute;left:448.44px;top:301.00px;font-size:15.50px;line-height:15.50px;font-weight:normal;color:#1e1e1e;white-space:nowrap;transform:scaleX(0.9680);transform-origin:0 0;">15kg</div><div style="position:absolute;left:502.50px;top:301.00px;font-size:15.50px;line-height:15.50px;font-weight:normal;color:#1e1e1e;white-space:nowrap;transform:scaleX(0.9680);transform-origin:0 0;">2711</div><div style="position:absolute;left:559.05px;top:301.00px;font-size:15.50px;line-height:15.50px;font-weight:normal;color:#1e1e1e;white-space:nowrap;transform:scaleX(0.9680);transform-origin:0 0;">2711</div><div style="position:absolute;left:448.64px;top:322.00px;font-size:15.50px;line-height:15.50px;font-weight:normal;color:#1e1e1e;white-space:nowrap;transform:scaleX(0.9680);transform-origin:0 0;">20kg</div><div style="position:absolute;left:502.46px;top:322.00px;font-size:15.50px;line-height:15.50px;font-weight:normal;color:#1e1e1e;white-space:nowrap;transform:scaleX(0.9680);transform-origin:0 0;">2033</div><div style="position:absolute;left:559.01px;top:322.00px;font-size:15.50px;line-height:15.50px;font-weight:normal;color:#1e1e1e;white-space:nowrap;transform:scaleX(0.9680);transform-origin:0 0;">2033</div><div style="position:absolute;left:448.64px;top:343.00px;font-size:15.50px;line-height:15.50px;font-weight:normal;color:#1e1e1e;white-space:nowrap;transform:scaleX(0.9680);transform-origin:0 0;">20kg</div><div style="position:absolute;left:502.46px;top:343.00px;font-size:15.50px;line-height:15.50px;font-weight:normal;color:#1e1e1e;white-space:nowrap;transform:scaleX(0.9680);transform-origin:0 0;">2033</div><div style="position:absolute;left:559.01px;top:343.00px;font-size:15.50px;line-height:15.50px;font-weight:normal;color:#1e1e1e;white-space:nowrap;transform:scaleX(0.9680);transform-origin:0 0;">2033</div><div style="position:absolute;left:418.31px;top:395.00px;font-size:12.21px;line-height:12.21px;font-weight:normal;color:#555;white-space:nowrap;">40</div><div style="position:absolute;left:415.14px;top:406.00px;font-size:9.59px;line-height:9.59px;font-weight:normal;color:#666;white-space:nowrap;transform:scaleX(0.9079);transform-origin:0 0;">Lead</div><div style="position:absolute;left:452.80px;top:364.00px;font-size:15.50px;line-height:15.50px;font-weight:normal;color:#1e1e1e;white-space:nowrap;transform:scaleX(0.9680);transform-origin:0 0;">7kg</div><div style="position:absolute;left:502.59px;top:364.00px;font-size:15.50px;line-height:15.50px;font-weight:normal;color:#1e1e1e;white-space:nowrap;transform:scaleX(0.9680);transform-origin:0 0;">3511</div><div style="position:absolute;left:559.14px;top:364.00px;font-size:15.50px;line-height:15.50px;font-weight:normal;color:#1e1e1e;white-space:nowrap;transform:scaleX(0.9680);transform-origin:0 0;">3511</div><div style="position:absolute;left:448.44px;top:385.00px;font-size:15.50px;line-height:15.50px;font-weight:normal;color:#1e1e1e;white-space:nowrap;transform:scaleX(0.9680);transform-origin:0 0;">12kg</div><div style="position:absolute;left:502.45px;top:385.00px;font-size:15.50px;line-height:15.50px;font-weight:normal;color:#1e1e1e;white-space:nowrap;transform:scaleX(0.9680);transform-origin:0 0;">2055</div><div style="position:absolute;left:559.00px;top:385.00px;font-size:15.50px;line-height:15.50px;font-weight:normal;color:#1e1e1e;white-space:nowrap;transform:scaleX(0.9680);transform-origin:0 0;">2055</div><div style="position:absolute;left:448.44px;top:406.00px;font-size:15.50px;line-height:15.50px;font-weight:normal;color:#1e1e1e;white-space:nowrap;transform:scaleX(0.9680);transform-origin:0 0;">12kg</div><div style="position:absolute;left:502.45px;top:406.00px;font-size:15.50px;line-height:15.50px;font-weight:normal;color:#1e1e1e;white-space:nowrap;transform:scaleX(0.9680);transform-origin:0 0;">2055</div><div style="position:absolute;left:559.00px;top:406.00px;font-size:15.50px;line-height:15.50px;font-weight:normal;color:#1e1e1e;white-space:nowrap;transform:scaleX(0.9680);transform-origin:0 0;">2055</div><div style="position:absolute;left:625.40px;top:141.00px;width:99.40px;height:63.00px;background:#f7f4e2;"></div><div style="position:absolute;left:625.40px;top:140.50px;width:99.40px;height:1.30px;background:#2a2a2a;"></div><div style="position:absolute;left:724.80px;top:140.20px;width:178.60px;height:2.00px;background:#111;"></div><div style="position:absolute;left:625.40px;top:161.80px;width:278.00px;height:1.20px;background:#8a8a8a;"></div><div style="position:absolute;left:625.40px;top:182.80px;width:278.00px;height:1.20px;background:#8a8a8a;"></div><div style="position:absolute;left:625.40px;top:203.40px;width:278.00px;height:1.50px;background:#808080;"></div><div style="position:absolute;left:724.00px;top:141.00px;width:2.00px;height:63.00px;background:#111;"></div><div style="position:absolute;left:663.64px;top:143.00px;font-size:16.40px;line-height:16.40px;font-weight:bold;color:#1a1a1a;white-space:nowrap;transform:scaleX(0.9166);transform-origin:0 0;">MY</div><div style="position:absolute;left:796.64px;top:143.00px;font-size:16.30px;line-height:16.30px;font-weight:normal;color:#1e1e1e;white-space:nowrap;transform:scaleX(0.9300);transform-origin:0 0;">2052</div><div style="position:absolute;left:663.63px;top:164.00px;font-size:16.40px;line-height:16.40px;font-weight:bold;color:#1a1a1a;white-space:nowrap;transform:scaleX(0.9284);transform-origin:0 0;">MP</div><div style="position:absolute;left:796.64px;top:164.00px;font-size:16.30px;line-height:16.30px;font-weight:normal;color:#1e1e1e;white-space:nowrap;transform:scaleX(0.9300);transform-origin:0 0;">2052</div><div style="position:absolute;left:663.68px;top:185.00px;font-size:16.40px;line-height:16.40px;font-weight:bold;color:#1a1a1a;white-space:nowrap;transform:scaleX(0.8849);transform-origin:0 0;">MR</div><div style="position:absolute;left:796.36px;top:185.00px;font-size:16.30px;line-height:16.30px;font-weight:normal;color:#1e1e1e;white-space:nowrap;transform:scaleX(0.9300);transform-origin:0 0;">1810</div><div style="position:absolute;left:624.27px;top:222.00px;font-size:11.05px;line-height:11.05px;font-weight:normal;color:#6c6c6c;white-space:nowrap;transform:scaleX(0.9316);transform-origin:0 0;-webkit-text-stroke:0.25px #6c6c6c;">The torque value in the chart indicate the center of gravity.</div><div style="position:absolute;left:624.01px;top:246.00px;font-size:11.05px;line-height:11.05px;font-weight:normal;color:#6c6c6c;white-space:nowrap;transform:scaleX(0.9399);transform-origin:0 0;-webkit-text-stroke:0.25px #6c6c6c;">Operation life is 8,000km when the product is using under the</div><div style="position:absolute;left:624.21px;top:258.00px;font-size:11.05px;line-height:11.05px;font-weight:normal;color:#6c6c6c;white-space:nowrap;transform:scaleX(0.9399);transform-origin:0 0;-webkit-text-stroke:0.25px #6c6c6c;">specified conditions.</div><div style="position:absolute;left:623.65px;top:282.00px;font-size:11.05px;line-height:11.05px;font-weight:normal;color:#6c6c6c;white-space:nowrap;transform:scaleX(0.9418);transform-origin:0 0;-webkit-text-stroke:0.25px #6c6c6c;">Data information is not for ceiling-mount inverse use.</div><div style="position:absolute;left:623.94px;top:294.00px;font-size:11.05px;line-height:11.05px;font-weight:normal;color:#6c6c6c;white-space:nowrap;-webkit-text-stroke:0.25px #6c6c6c;">Contact us for the details if you want to apply ceiling-mount</div><div style="position:absolute;left:623.83px;top:306.00px;font-size:11.05px;line-height:11.05px;font-weight:normal;color:#6c6c6c;white-space:nowrap;transform:scaleX(0.9098);transform-origin:0 0;-webkit-text-stroke:0.25px #6c6c6c;">inverse usage.</div><div style="position:absolute;left:5.00px;top:488.00px;width:901.00px;height:33.60px;background:#eca85b;"></div><div style="position:absolute;left:5.00px;top:521.60px;width:154.60px;height:207.10px;background:#f7f4e2;"></div><div style="position:absolute;left:5.00px;top:487.30px;width:901.00px;height:1.30px;background:#7a6e62;"></div><div style="position:absolute;left:159.60px;top:487.70px;width:166.10px;height:1.20px;background:#101028;"></div><div style="position:absolute;left:498.60px;top:487.70px;width:264.00px;height:1.20px;background:#101028;"></div><div style="position:absolute;left:5.00px;top:521.10px;width:901.00px;height:1.50px;background:#8a6a45;"></div><div style="position:absolute;left:74.90px;top:488.00px;width:1.20px;height:33.60px;background:#444;"></div><div style="position:absolute;left:159.10px;top:488.00px;width:1.20px;height:33.60px;background:#444;"></div><div style="position:absolute;left:325.20px;top:488.00px;width:1.20px;height:33.60px;background:#444;"></div><div style="position:absolute;left:408.90px;top:488.00px;width:1.20px;height:33.60px;background:#444;"></div><div style="position:absolute;left:498.10px;top:488.00px;width:1.20px;height:33.60px;background:#444;"></div><div style="position:absolute;left:762.10px;top:488.00px;width:1.20px;height:33.60px;background:#444;"></div><div style="position:absolute;left:159.60px;top:556.00px;width:746.40px;height:1.20px;background:#8a8a8a;"></div><div style="position:absolute;left:5.00px;top:590.90px;width:901.00px;height:1.20px;background:#6a6a6a;"></div><div style="position:absolute;left:159.60px;top:625.90px;width:746.40px;height:1.20px;background:#8a8a8a;"></div><div style="position:absolute;left:5.00px;top:660.00px;width:901.00px;height:1.20px;background:#6a6a6a;"></div><div style="position:absolute;left:159.60px;top:695.00px;width:746.40px;height:1.20px;background:#8a8a8a;"></div><div style="position:absolute;left:5.00px;top:727.80px;width:901.80px;height:1.50px;background:#858585;"></div><div style="position:absolute;left:5.10px;top:488.00px;width:1.10px;height:241.00px;background:#222;"></div><div style="position:absolute;left:905.30px;top:488.00px;width:1.50px;height:33.60px;background:#555;"></div><div style="position:absolute;left:905.30px;top:521.60px;width:1.50px;height:207.40px;background:#7d7d7d;"></div><div style="position:absolute;left:74.90px;top:521.60px;width:1.20px;height:207.10px;background:#7a7a7a;"></div><div style="position:absolute;left:158.90px;top:521.60px;width:1.50px;height:207.10px;background:#1a1a1a;"></div><div style="position:absolute;left:325.20px;top:521.60px;width:1.20px;height:207.10px;background:#8a8a8a;"></div><div style="position:absolute;left:408.90px;top:521.60px;width:1.20px;height:207.10px;background:#8a8a8a;"></div><div style="position:absolute;left:498.10px;top:521.60px;width:1.20px;height:207.10px;background:#8a8a8a;"></div><div style="position:absolute;left:762.10px;top:521.60px;width:1.20px;height:207.10px;background:#8a8a8a;"></div><div style="position:absolute;left:22.06px;top:499.00px;font-size:12.79px;line-height:12.79px;font-weight:normal;color:#fff;white-space:nowrap;transform:scaleX(0.8997);transform-origin:0 0;-webkit-text-stroke:0.42px #fff;">Brand</div><div style="position:absolute;left:102.08px;top:499.00px;font-size:12.79px;line-height:12.79px;font-weight:normal;color:#fff;white-space:nowrap;transform:scaleX(0.8773);transform-origin:0 0;-webkit-text-stroke:0.42px #fff;">Mark</div><div style="position:absolute;left:225.10px;top:499.00px;font-size:12.79px;line-height:12.79px;font-weight:normal;color:#fff;white-space:nowrap;transform:scaleX(0.8567);transform-origin:0 0;-webkit-text-stroke:0.42px #fff;">Brake</div><div style="position:absolute;left:352.75px;top:499.00px;font-size:12.79px;line-height:12.79px;font-weight:normal;color:#fff;white-space:nowrap;transform:scaleX(0.8960);transform-origin:0 0;-webkit-text-stroke:0.42px #fff;">Watt</div><div style="position:absolute;left:420.08px;top:499.00px;font-size:12.79px;line-height:12.79px;font-weight:normal;color:#fff;white-space:nowrap;transform:scaleX(0.8646);transform-origin:0 0;-webkit-text-stroke:0.42px #fff;">AC-Voltage</div><div style="position:absolute;left:594.33px;top:499.00px;font-size:12.79px;line-height:12.79px;font-weight:normal;color:#fff;white-space:nowrap;transform:scaleX(0.9224);transform-origin:0 0;-webkit-text-stroke:0.42px #fff;">Motor Model</div><div style="position:absolute;left:798.05px;top:499.00px;font-size:12.79px;line-height:12.79px;font-weight:normal;color:#fff;white-space:nowrap;transform:scaleX(0.9069);transform-origin:0 0;-webkit-text-stroke:0.42px #fff;">Driver Model</div><div style="position:absolute;left:14.23px;top:546.00px;font-size:12.50px;line-height:12.50px;font-weight:normal;color:#222;white-space:nowrap;transform:scaleX(0.9500);transform-origin:0 0;-webkit-text-stroke:0.4px #222;">Mitsubishi</div><div style="position:absolute;left:111.28px;top:549.00px;font-size:14.53px;line-height:14.53px;font-weight:normal;color:#222;white-space:nowrap;transform:scaleX(1.0223);transform-origin:0 0;-webkit-text-stroke:0.45px #222;">M</div><div style="position:absolute;left:11.29px;top:616.00px;font-size:12.50px;line-height:12.50px;font-weight:normal;color:#222;white-space:nowrap;transform:scaleX(0.8865);transform-origin:0 0;-webkit-text-stroke:0.4px #222;">Panasonic</div><div style="position:absolute;left:113.75px;top:618.00px;font-size:14.53px;line-height:14.53px;font-weight:normal;color:#222;white-space:nowrap;transform:scaleX(0.7941);transform-origin:0 0;-webkit-text-stroke:0.45px #222;">P</div><div style="position:absolute;left:25.61px;top:684.00px;font-size:12.50px;line-height:12.50px;font-weight:normal;color:#222;white-space:nowrap;transform:scaleX(0.8720);transform-origin:0 0;-webkit-text-stroke:0.4px #222;">Delta</div><div style="position:absolute;left:113.63px;top:687.00px;font-size:14.53px;line-height:14.53px;font-weight:normal;color:#222;white-space:nowrap;transform:scaleX(0.8306);transform-origin:0 0;-webkit-text-stroke:0.45px #222;">T</div><div style="position:absolute;left:171.59px;top:535.00px;font-size:12.21px;line-height:12.21px;font-weight:normal;color:#222;white-space:nowrap;transform:scaleX(0.9054);transform-origin:0 0;-webkit-text-stroke:0.4px #222;">No Brake (Horizontal Type)</div><div style="position:absolute;left:355.24px;top:532.00px;font-size:15.84px;line-height:15.84px;font-weight:normal;color:#222;white-space:nowrap;transform:scaleX(0.8683);transform-origin:0 0;-webkit-text-stroke:0.45px #222;">750</div><div style="position:absolute;left:441.56px;top:532.00px;font-size:15.84px;line-height:15.84px;font-weight:normal;color:#222;white-space:nowrap;transform:scaleX(0.8599);transform-origin:0 0;-webkit-text-stroke:0.45px #222;">220</div><div style="position:absolute;left:601.12px;top:532.00px;font-size:15.84px;line-height:15.84px;font-weight:normal;color:#222;white-space:nowrap;transform:scaleX(0.8283);transform-origin:0 0;-webkit-text-stroke:0.45px #222;">HG-KR73</div><div style="position:absolute;left:799.16px;top:532.00px;font-size:15.84px;line-height:15.84px;font-weight:normal;color:#222;white-space:nowrap;transform:scaleX(0.8393);transform-origin:0 0;-webkit-text-stroke:0.45px #222;">MR-J4-70A</div><div style="position:absolute;left:174.45px;top:570.00px;font-size:12.21px;line-height:12.21px;font-weight:normal;color:#222;white-space:nowrap;transform:scaleX(0.8968);transform-origin:0 0;-webkit-text-stroke:0.4px #222;">With Brake (Vertical Type)</div><div style="position:absolute;left:355.24px;top:567.00px;font-size:15.84px;line-height:15.84px;font-weight:normal;color:#222;white-space:nowrap;transform:scaleX(0.8683);transform-origin:0 0;-webkit-text-stroke:0.45px #222;">750</div><div style="position:absolute;left:441.56px;top:567.00px;font-size:15.84px;line-height:15.84px;font-weight:normal;color:#222;white-space:nowrap;transform:scaleX(0.8599);transform-origin:0 0;-webkit-text-stroke:0.45px #222;">220</div><div style="position:absolute;left:596.62px;top:567.00px;font-size:15.84px;line-height:15.84px;font-weight:normal;color:#222;white-space:nowrap;transform:scaleX(0.8330);transform-origin:0 0;-webkit-text-stroke:0.45px #222;">HG-KR73B</div><div style="position:absolute;left:799.16px;top:567.00px;font-size:15.84px;line-height:15.84px;font-weight:normal;color:#222;white-space:nowrap;transform:scaleX(0.8393);transform-origin:0 0;-webkit-text-stroke:0.45px #222;">MR-J4-70A</div><div style="position:absolute;left:171.59px;top:604.00px;font-size:12.21px;line-height:12.21px;font-weight:normal;color:#222;white-space:nowrap;transform:scaleX(0.9054);transform-origin:0 0;-webkit-text-stroke:0.4px #222;">No Brake (Horizontal Type)</div><div style="position:absolute;left:355.24px;top:601.00px;font-size:15.84px;line-height:15.84px;font-weight:normal;color:#222;white-space:nowrap;transform:scaleX(0.8683);transform-origin:0 0;-webkit-text-stroke:0.45px #222;">750</div><div style="position:absolute;left:441.56px;top:601.00px;font-size:15.84px;line-height:15.84px;font-weight:normal;color:#222;white-space:nowrap;transform:scaleX(0.8599);transform-origin:0 0;-webkit-text-stroke:0.45px #222;">220</div><div style="position:absolute;left:581.64px;top:601.00px;font-size:15.84px;line-height:15.84px;font-weight:normal;color:#222;white-space:nowrap;transform:scaleX(0.8888);transform-origin:0 0;-webkit-text-stroke:0.45px #222;">MHMD082G1U</div><div style="position:absolute;left:792.67px;top:601.00px;font-size:15.84px;line-height:15.84px;font-weight:normal;color:#222;white-space:nowrap;transform:scaleX(0.8728);transform-origin:0 0;-webkit-text-stroke:0.45px #222;">MCDHT3520</div><div style="position:absolute;left:174.45px;top:639.00px;font-size:12.21px;line-height:12.21px;font-weight:normal;color:#222;white-space:nowrap;transform:scaleX(0.8968);transform-origin:0 0;-webkit-text-stroke:0.4px #222;">With Brake (Vertical Type)</div><div style="position:absolute;left:355.24px;top:636.00px;font-size:15.84px;line-height:15.84px;font-weight:normal;color:#222;white-space:nowrap;transform:scaleX(0.8683);transform-origin:0 0;-webkit-text-stroke:0.45px #222;">750</div><div style="position:absolute;left:441.56px;top:636.00px;font-size:15.84px;line-height:15.84px;font-weight:normal;color:#222;white-space:nowrap;transform:scaleX(0.8599);transform-origin:0 0;-webkit-text-stroke:0.45px #222;">220</div><div style="position:absolute;left:581.65px;top:636.00px;font-size:15.84px;line-height:15.84px;font-weight:normal;color:#222;white-space:nowrap;transform:scaleX(0.8864);transform-origin:0 0;-webkit-text-stroke:0.45px #222;">MHMD082G1V</div><div style="position:absolute;left:792.67px;top:636.00px;font-size:15.84px;line-height:15.84px;font-weight:normal;color:#222;white-space:nowrap;transform:scaleX(0.8728);transform-origin:0 0;-webkit-text-stroke:0.45px #222;">MCDHT3520</div><div style="position:absolute;left:171.59px;top:674.00px;font-size:12.21px;line-height:12.21px;font-weight:normal;color:#222;white-space:nowrap;transform:scaleX(0.9054);transform-origin:0 0;-webkit-text-stroke:0.4px #222;">No Brake (Horizontal Type)</div><div style="position:absolute;left:355.24px;top:671.00px;font-size:15.84px;line-height:15.84px;font-weight:normal;color:#222;white-space:nowrap;transform:scaleX(0.8683);transform-origin:0 0;-webkit-text-stroke:0.45px #222;">750</div><div style="position:absolute;left:441.56px;top:671.00px;font-size:15.84px;line-height:15.84px;font-weight:normal;color:#222;white-space:nowrap;transform:scaleX(0.8599);transform-origin:0 0;-webkit-text-stroke:0.45px #222;">220</div><div style="position:absolute;left:576.72px;top:671.00px;font-size:15.84px;line-height:15.84px;font-weight:normal;color:#222;white-space:nowrap;transform:scaleX(0.8279);transform-origin:0 0;-webkit-text-stroke:0.45px #222;">ECMA-C20807ES</div><div style="position:absolute;left:787.52px;top:671.00px;font-size:15.84px;line-height:15.84px;font-weight:normal;color:#222;white-space:nowrap;transform:scaleX(0.8517);transform-origin:0 0;-webkit-text-stroke:0.45px #222;">ASD-B20721-B</div><div style="position:absolute;left:174.45px;top:708.00px;font-size:12.21px;line-height:12.21px;font-weight:normal;color:#222;white-space:nowrap;transform:scaleX(0.8968);transform-origin:0 0;-webkit-text-stroke:0.4px #222;">With Brake (Vertical Type)</div><div style="position:absolute;left:355.24px;top:705.00px;font-size:15.84px;line-height:15.84px;font-weight:normal;color:#222;white-space:nowrap;transform:scaleX(0.8683);transform-origin:0 0;-webkit-text-stroke:0.45px #222;">750</div><div style="position:absolute;left:441.56px;top:705.00px;font-size:15.84px;line-height:15.84px;font-weight:normal;color:#222;white-space:nowrap;transform:scaleX(0.8599);transform-origin:0 0;-webkit-text-stroke:0.45px #222;">220</div><div style="position:absolute;left:576.72px;top:705.00px;font-size:15.84px;line-height:15.84px;font-weight:normal;color:#222;white-space:nowrap;transform:scaleX(0.8338);transform-origin:0 0;-webkit-text-stroke:0.45px #222;">ECMA-C20807FS</div><div style="position:absolute;left:787.52px;top:705.00px;font-size:15.84px;line-height:15.84px;font-weight:normal;color:#222;white-space:nowrap;transform:scaleX(0.8517);transform-origin:0 0;-webkit-text-stroke:0.45px #222;">ASD-B20721-B</div>
<svg width="925" height="734" viewBox="0 0 925 734" style="position:absolute;left:0;top:0">
<g fill="none" stroke="#2e2e2e" stroke-width="0.8" stroke-linejoin="round">
 <!-- diagram 1 rail -->
 <path d="M64.5,93.3 L81.8,96.7 L81.3,106.7 L64.5,103.9 Z"/>
 <path d="M64.5,93.3 L72.3,87.6 M88,76 L126,48.1 L142.2,52 L81.8,96.7 M142.2,52 L142.7,62 L81.3,106.7"/>
 <!-- carriage -->
 <path d="M72.35,85.8 L88,74.3 L102.5,77.7 L88.5,88.8 Z"/>
 <path d="M72.35,85.8 L72.35,88.3 L88.5,91.4 L102.5,81 L102.5,77.7 M88.5,88.8 L88.5,91.4"/>
</g>
<path d="M72.35,85.3 L72.35,88.6 M88.5,88.5 L88.5,91.8 M102.5,77.4 L102.5,81.3" stroke="#161616" stroke-width="1.1" fill="none"/>
<g fill="none" stroke="#161616" stroke-width="1.0">
 <path d="M88.3,46.7 L88.5,83.3 L123.2,90 M60.6,103.9 L88.5,83.3"/>
</g>
<g fill="#1a1a1a">
 <circle cx="88.3" cy="46.7" r="2.1"/><circle cx="123.2" cy="90" r="2.1"/><circle cx="60.6" cy="103.9" r="2.1"/>
</g>
<g font-family="Liberation Sans" font-weight="bold" font-size="9.3" fill="#1a1a1a">
 <text x="93.2" y="49.9">A</text><text x="126.9" y="94.5">C</text><text x="57" y="115.2">B</text>
</g>

<!-- diagram 2 -->
<g fill="none" stroke="#2e2e2e" stroke-width="0.8" stroke-linejoin="round">
 <path d="M258.3,54.1 L299.4,57.5 M258.3,70.1 L299.4,73.7 M322,62 L338.6,63.4 M322,74.6 L338.6,76.6"/>
 <path d="M258.3,54.1 L258.3,70.1 M258.3,54.1 L262.5,51.1 L343.4,57.6 L338.6,60.6 M343.4,57.6 L343.4,73.7 L338.6,76.6 M338.6,60.6 L322.5,59.3"/>
 <path d="M299.4,58.8 L300.5,59 L323.1,60.4 L323.1,74.9 L322,76.6 L299.4,73.7 Z M299.4,58.8 L300.5,58.3 L323.1,59.4"/>
 <path d="M300.5,60.5 L321.5,61.9 L321.5,76.4"/>
</g>
<path d="M338.6,60.8 L338.6,76.6" stroke="#1a1a1a" stroke-width="1.1"/>
<g fill="none" stroke="#161616" stroke-width="1.0">
 <path d="M280.3,86.2 L310,68.3 L310.6,104 M310,68.3 L346.9,72.2"/>
</g>
<g fill="#1a1a1a">
 <circle cx="280.3" cy="86.2" r="2.1"/><circle cx="310.6" cy="104" r="2.1"/><circle cx="346.9" cy="72.2" r="2.1"/>
</g>
<g font-family="Liberation Sans" font-weight="bold" font-size="9.3" fill="#1a1a1a">
 <text x="271" y="92.9">A</text><text x="314.5" y="107.8">C</text><text x="344.2" y="82.4">B</text>
</g>

<!-- diagram 3 -->
<g fill="none" stroke="#2e2e2e" stroke-width="0.8" stroke-linejoin="round">
 <path d="M496.9,47.5 L501.9,43 L514.7,45.8 L510.3,49.2 Z"/>
 <path d="M496.9,47.5 L496.9,113.4 L510.3,115.1 L510.3,49.2 M514.7,45.8 L514.7,111.7 L510.3,115.1"/>
 <path d="M496.9,59.2 L510.3,60.9 M496.9,61 L508.6,62.5 M496.9,77.7 L508.6,79.3"/>
</g>
<path d="M508.6,61.8 L508.6,79.3" stroke="#1a1a1a" stroke-width="1.1"/>
<g fill="none" stroke="#161616" stroke-width="1.0">
 <path d="M483.2,88.5 L503.6,71 L510.3,71.4 L532.8,74.6"/>
</g>
<g fill="#1a1a1a">
 <circle cx="483.2" cy="88.5" r="2.1"/><circle cx="532.8" cy="74.6" r="2.1"/>
</g>
<g font-family="Liberation Sans" font-weight="bold" font-size="8.2" fill="#1a1a1a">
 <text x="480.9" y="97.4">A</text><text x="530.7" y="83.5">C</text>
</g>

<!-- diagram 4 -->
<g fill="none" stroke="#2e2e2e" stroke-width="0.8" stroke-linejoin="round">
 <path d="M734.6,91.6 L750.8,95 L750.8,102.8 L734.6,100"/>
 <path d="M734.6,91.6 L742.4,86 M755.8,76 L789.9,50.8 L804.4,54.2 L750.8,95 M804.4,54.2 L804.4,62 L750.8,102.8"/>
 <path d="M742.4,83.3 L755.8,74.3 L769.7,77.7 L756.9,86.5 Z"/>
 <path d="M742.4,86 L756.9,88.8 L769.7,80.5"/>
</g>
<g fill="none" stroke="#161616" stroke-width="1.0">
 <path d="M742.4,82.6 L742.4,86.5 M769.7,77 L769.7,81 M756.9,86 L756.9,89.5"/>
 <path d="M756.4,49.4 L756.4,81.6 L787.6,88.1 M731.7,100.8 L756.4,81.6"/>
</g>
<g fill="#1a1a1a">
 <circle cx="756.4" cy="49.4" r="2.0"/><circle cx="787.6" cy="88.1" r="2.0"/><circle cx="731.7" cy="100.8" r="2.0"/>
</g>
<g fill="#6e6e70">
 <rect x="723.5" y="50.9" width="22.5" height="9.5" rx="4.75"/>
 <rect x="782.3" y="91.5" width="22.3" height="9.3" rx="4.65"/>
 <rect x="739.9" y="103.2" width="21.9" height="9.3" rx="4.65"/>
</g>
<g font-family="Liberation Sans" font-weight="bold" font-size="10.5" fill="#f4f4f4">
 <text x="726.3" y="59.7" textLength="16" lengthAdjust="spacingAndGlyphs">MY</text>
 <text x="785" y="100.1" textLength="16.5" lengthAdjust="spacingAndGlyphs">MP</text>
 <text x="742.5" y="112" textLength="16.5" lengthAdjust="spacingAndGlyphs">MR</text>
</g>
<g fill="none" stroke="#1d9a4a" stroke-width="1.7" stroke-linecap="round">
 <path d="M750.6,47.5 A9.2,5.6 0 1 0 764.6,50"/>
 <path d="M781.2,93 A6.4,7.6 0 1 1 793.4,85"/>
 <path d="M725.3,100 A6.4,7 0 1 1 738,103.5"/>
</g>
<g fill="#1d9a4a">
 <path d="M748.5,46.5 L754.5,44.6 L752.4,50 Z"/>
 <path d="M766.8,47.6 L767.2,53.4 L762.4,51 Z"/>
 <path d="M778.5,91.5 L783.5,92 L780.7,96.2 Z"/>
 <path d="M790.5,84.5 L795.6,84.5 L793.2,89 Z"/>
 <path d="M723,98.5 L727.8,99.6 L724.8,103.5 Z"/>
 <path d="M735.5,104 L740.5,103.6 L738.2,108 Z"/>
</g>
</svg>

</body></html>
